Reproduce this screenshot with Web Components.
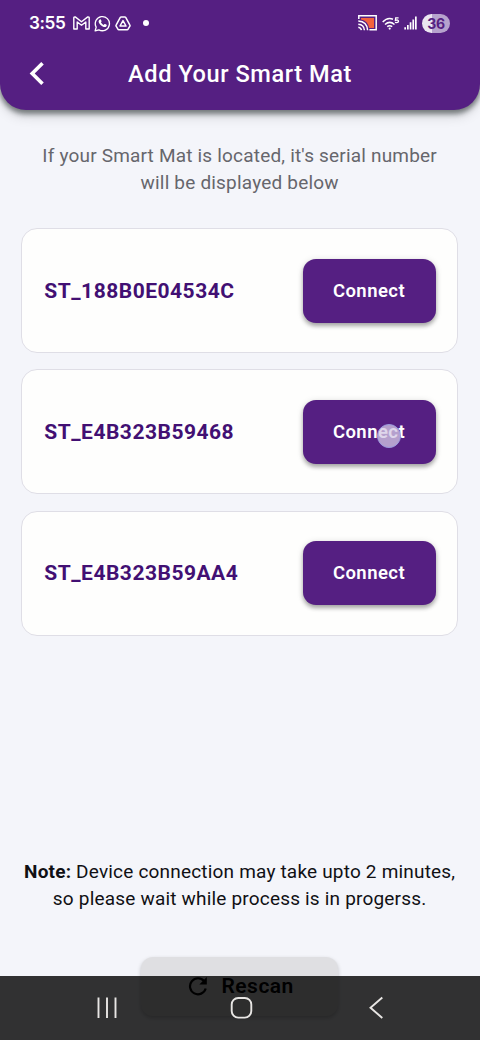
<!DOCTYPE html>
<html lang="en">
<head>
<meta charset="utf-8">
<title>Add Your Smart Mat</title>
<style>
html,body{margin:0;height:100%;overflow:hidden;background:#f4f5fa;font-family:Roboto,sans-serif}
</style>
</head>
<body>
<mat-screen></mat-screen>
<script>
const define = (name, html) => customElements.define(name, class extends HTMLElement {
  constructor() {
    super();
    this.attachShadow({ mode: 'open' }).innerHTML = html;
  }
});

define('status-bar', `
<style>
:host{display:flex;height:46px;box-sizing:border-box;padding:0 30px 0 29px;align-items:center;justify-content:space-between;color:#fff}
div{display:flex;align-items:center}
.time{font:600 17.2px/20px Inter,sans-serif;letter-spacing:-.4px;width:44px;white-space:nowrap}
svg{display:block;flex:none}
.dot{width:6px;height:6px;border-radius:50%;background:#fff;margin-left:12px}
.battery{width:28px;height:19px;border-radius:10px;background:linear-gradient(90deg,#ebe5f1 36%,#b6a2cd 36%);color:#551f82;font:700 14px/19px Inter,sans-serif;letter-spacing:-.4px;text-align:center;margin-left:5px}
</style>
<div>
 <span class="time">3:55</span>
 <svg width="17" height="14" viewBox="0 0 17 14" fill="none" stroke="#fff" stroke-width="1.4" stroke-linejoin="round"><path d="M.8 13V1.8Q.8 .8 2.2 .9L8.5 5.8 14.8.9Q16.2.8 16.2 1.8V13H12.8V6L8.5 9.3 4.2 6V13Z"/></svg>
 <svg style="margin-left:4px" width="17" height="17" viewBox="0 0 18 18"><path d="M1.2 16.8 2.3 12.8A7.5 7.5 0 1 1 5.2 15.7Z" fill="none" stroke="#fff" stroke-width="1.4" stroke-linejoin="round"/><path d="M6.2 4.7C6.7 4.3 7.2 4.5 7.4 5L8 6.5C8.1 6.9 7.6 7.3 7.3 7.7 8 9 8.9 9.9 10.3 10.5L11.1 9.6C11.3 9.4 11.6 9.4 11.8 9.5L13.3 10.2C13.7 10.4 13.5 11.3 13.2 11.8 12.4 12.9 11 13 9.6 12.4 7.3 11.4 5.7 9.6 5 7.8 4.6 6.6 5.2 5.3 6.2 4.7Z" fill="#fff"/></svg>
 <svg style="margin-left:4px" width="16" height="15" viewBox="0 0 16 15" fill="none" stroke="#fff" stroke-width="1.5" stroke-linejoin="round"><path d="M6.2.9H9.8Q10.4.9 10.7 1.4L14.9 9.2Q15.2 9.7 14.9 10.2L13.1 13.2Q12.8 13.8 12.2 13.8H3.8Q3.2 13.8 2.9 13.2L1.1 10.2Q.8 9.7 1.1 9.2L5.3 1.4Q5.6.9 6.2.9Z"/><path d="M8 4.6 11 10H5Z"/></svg>
 <i class="dot"></i>
</div>
<div>
 <svg width="19" height="16" viewBox="0 0 19 16" fill="none" stroke="#fff" stroke-width="1.5"><path d="M3 3H16V13H11Q10 6 3 4.6Z" fill="#f2613d" stroke="none"/><path d="M.8 4V.8H18.2V14.8H11.4M.3 6Q9 6.4 9.6 15.2M.3 9.2Q6 9.6 6.4 15.2M.3 12.2Q3 12.6 3.4 15.2"/></svg>
 <svg style="margin-left:5px" width="18" height="13" viewBox="0 0 18 13" fill="none" stroke="#fff" stroke-width="1.5"><path d="M.7 5Q5.5-.3 11 2.2M3 7.5Q7.7 3.3 12.5 7.5M5.2 9.7Q7.7 7.7 10.2 9.7"/><circle cx="7.7" cy="11.6" r="1.1" fill="#fff" stroke="none"/><path d="M16.6.9H13.7L13.4 3.3Q16.5 2.4 16.5 4.3 16.3 6 13 5.4" stroke-width="1.3"/></svg>
 <svg style="margin-left:4px" width="13" height="14" viewBox="0 0 13 14" fill="#fff"><path d="M.3 11.2H2V13.5H.3ZM3 9H4.7V13.5H3ZM5.7 6.2H7.4V13.5H5.7ZM8.4 3.4H10.1V13.5H8.4ZM11 .5H12.7V13.5H11Z"/></svg>
 <span class="battery">36</span>
</div>`);

define('app-header', `
<style>
:host{display:block;height:110px;background:#551f82;border-radius:0 0 26px 26px;color:#fff;box-shadow:0 3px 5px 1px rgba(20,30,30,.5),0 7px 12px rgba(0,0,0,.13)}
.bar{display:grid;grid-template-columns:60px 1fr 60px;align-items:center;height:56px}
svg{display:block;margin-left:29px;margin-top:-2px}
h1{margin:0;font-size:23.6px;line-height:30px;font-weight:500;letter-spacing:.55px;text-align:center;white-space:nowrap}
</style>
<status-bar></status-bar>
<div class="bar">
 <svg width="16" height="23" viewBox="0 0 16 23" fill="none" stroke="#fff" stroke-width="3.6"><path d="M13.5 1.3 3.2 11.5 13.5 21.7"/></svg>
 <h1><slot></slot></h1>
</div>`);

define('primary-button', `
<style>
:host{position:relative;display:flex;align-items:center;justify-content:center;width:133px;height:64px;border-radius:13px;background:#551f82;color:#fff;font-size:18.5px;font-weight:600;letter-spacing:.45px;box-shadow:0 3px 4px rgba(0,0,0,.3),0 1px 7px rgba(0,0,0,.12)}
</style><slot></slot><slot name="touch"></slot>`);

define('touch-point', `
<style>
:host{position:absolute;left:74px;top:24px;width:24px;height:24px;box-sizing:border-box;border-radius:50%;background:rgba(211,201,229,.76);border:1.5px solid #9b9ae0}
</style>`);

define('device-card', `
<style>
:host{display:flex;align-items:center;justify-content:space-between;height:125px;box-sizing:border-box;padding:0 21.5px 0 22px;border:1px solid #dfdee6;border-radius:16px;background:#fefefd}
.serial{font-size:21px;font-weight:700;letter-spacing:.5px;color:#421073}
</style>
<span class="serial"><slot></slot></span>
<primary-button>Connect<slot name="touch" slot="touch"></slot></primary-button>`);

define('rescan-button', `
<style>
:host{display:flex;align-items:center;justify-content:center;width:197px;height:59px;border-radius:12px;background:#dfdfe2;color:#000;font-size:21px;font-weight:600;letter-spacing:.5px;box-shadow:0 2px 4px rgba(0,0,0,.22)}
svg{margin:0 13px 0 3px}
</style>
<svg width="20" height="20" viewBox="0 0 20 20"><path d="M16.2 5.2A8 8 0 1 0 17.7 12.5" fill="none" stroke="#000" stroke-width="2.2"/><path d="M18.8 1V8.5H11.3Z"/></svg>
<slot></slot>`);

define('system-nav', `
<style>
:host{position:absolute;left:0;right:0;bottom:0;height:64px;background:rgba(0,0,0,.8)}
svg{display:block}
</style>
<svg width="480" height="64" viewBox="0 0 480 64" fill="none" stroke="#e8e6e4" stroke-width="1.9"><path d="M98.5 21.5V42M107 21.5V42M115.5 21.5V42"/><rect x="231.7" y="22" width="19.6" height="19.6" rx="6.5"/><path d="M382.3 21.5 370.5 31.8 382.3 42"/></svg>`);

define('mat-screen', `
<style>
:host{position:relative;display:flex;flex-direction:column;width:480px;height:1040px;overflow:hidden;background:#f4f5fa}
main{display:flex;flex-direction:column;flex:1;padding:33px 22px 0 21.3px}
p{margin:0;font-size:19px;line-height:26.6px;letter-spacing:.19px;text-align:center;white-space:nowrap}
.intro{color:#66666c}
.list{display:grid;gap:16.25px;margin-top:32px}
.note{margin:223.7px -10px 0;color:#101014}
b{font-weight:700}
rescan-button{align-self:center;margin-top:44.3px}
</style>
<app-header>Add Your Smart Mat</app-header>
<main>
 <p class="intro">If your Smart Mat is located, it's serial number<br>will be displayed below</p>
 <div class="list">
  <device-card>ST_188B0E04534C</device-card>
  <device-card>ST_E4B323B59468<touch-point slot="touch"></touch-point></device-card>
  <device-card>ST_E4B323B59AA4</device-card>
 </div>
 <p class="note"><b>Note:</b> Device connection may take upto 2 minutes,<br>so please wait while process is in progerss.</p>
 <rescan-button>Rescan</rescan-button>
</main>
<system-nav></system-nav>`);
</script>
</body>
</html>
